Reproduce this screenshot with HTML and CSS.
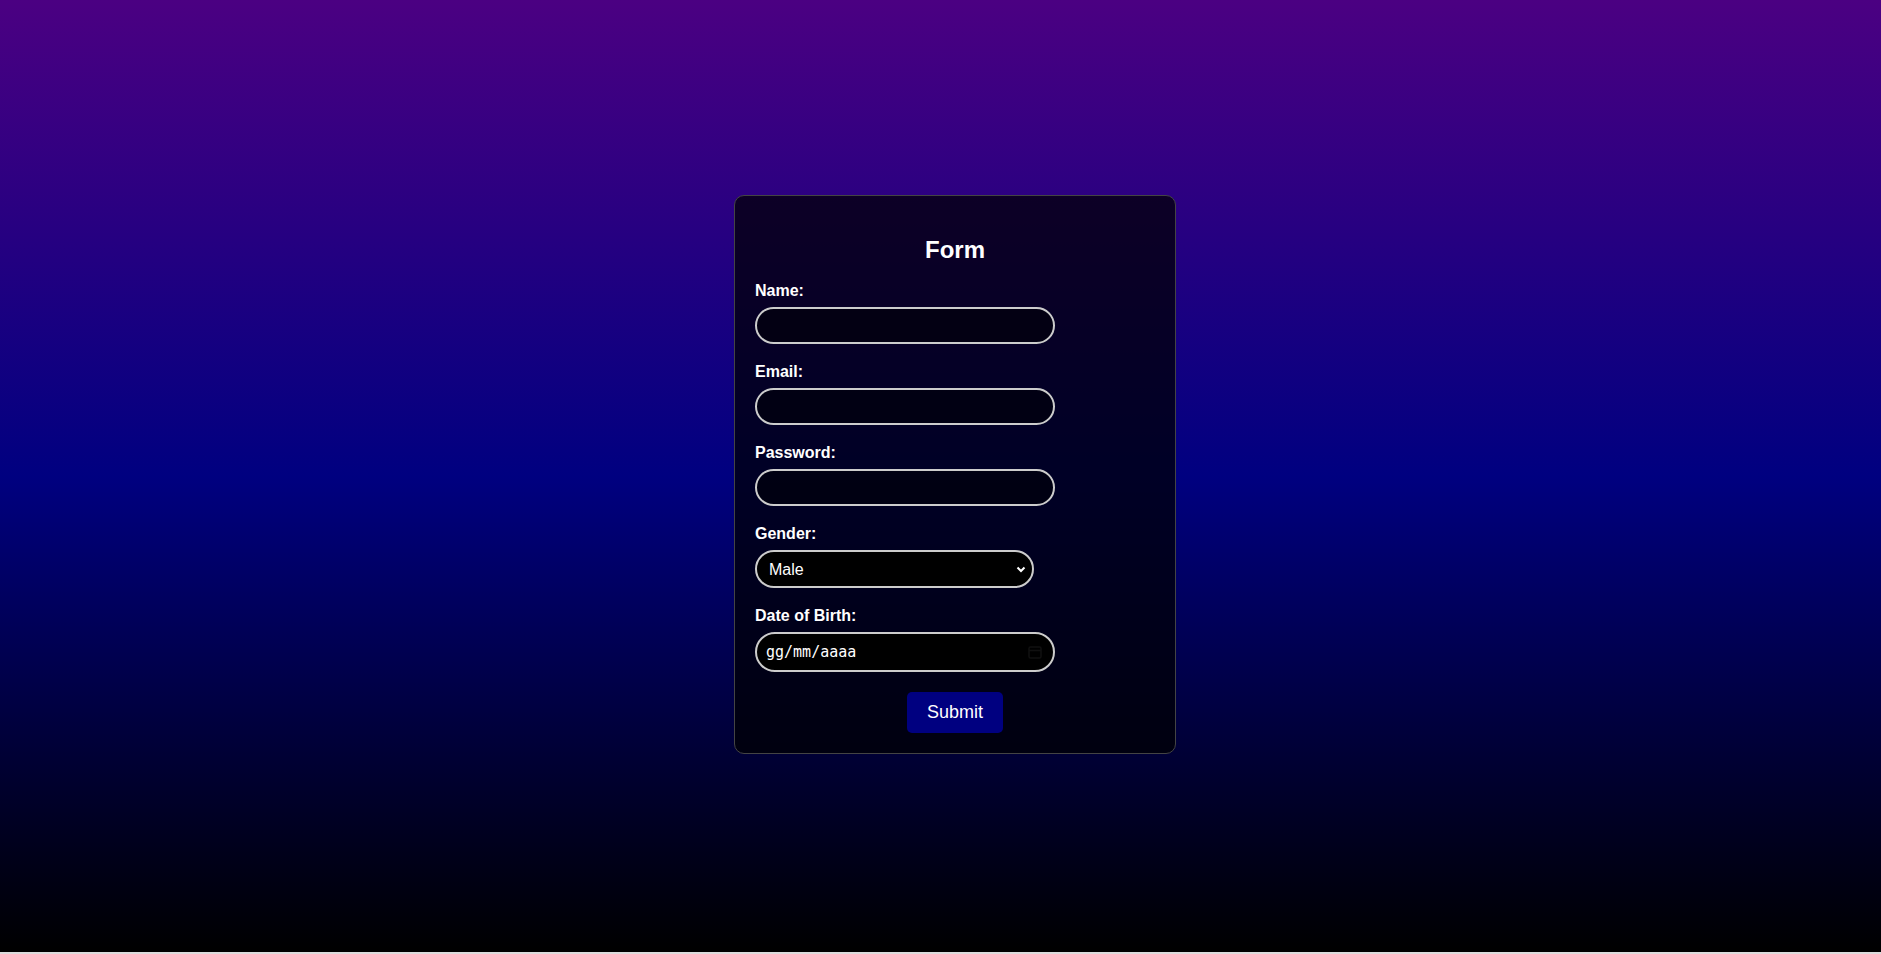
FILE: index.html
```html
<!DOCTYPE html>
<html lang="it">
<head>
<meta charset="utf-8">
<title>Form</title>
<link rel="stylesheet" href="styles.css">
</head>
<body>
  <form class="card">
    <h2 class="title">Form</h2>
    <div class="field">
      <label class="label" for="name">Name:</label>
      <input class="text-input" type="text" id="name">
    </div>
    <div class="field">
      <label class="label" for="email">Email:</label>
      <input class="text-input" type="text" id="email">
    </div>
    <div class="field">
      <label class="label" for="password">Password:</label>
      <input class="text-input" type="password" id="password">
    </div>
    <div class="field">
      <label class="label" for="gender">Gender:</label>
      <select class="select" id="gender">
        <option>Male</option>
        <option>Female</option>
      </select>
    </div>
    <div class="field field-last">
      <label class="label" for="dob">Date of Birth:</label>
      <div class="date-wrap">
        <input class="date-input" type="text" id="dob" value="gg/mm/aaaa" readonly>
        <svg class="cal-icon" width="14" height="14" viewBox="0 0 14 14" fill="none" stroke="#101010" stroke-width="1.5">
          <rect x="1" y="2" width="12" height="11" rx="1.5"/>
          <line x1="1" y1="5.5" x2="13" y2="5.5"/>
        </svg>
      </div>
    </div>
    <div class="actions">
      <button class="submit" type="button">Submit</button>
    </div>
  </form>
</body>
</html>
```
FILE: styles.css
```css
html {
  background: #dcdcdc;
}

body {
  margin: 0;
  height: 952px;
  box-sizing: border-box;
  padding-left: 29px;
  padding-bottom: 3px;
  background: linear-gradient(to bottom, #4b0082 0%, #000080 50%, #000000 100%);
  display: flex;
  justify-content: center;
  align-items: center;
  font-family: "Liberation Sans", Arial, sans-serif;
  color: #ffffff;
}

.card {
  width: 400px;
  padding: 20px;
  border: 1px solid #444444;
  border-radius: 10px;
  background: rgba(0, 0, 0, 0.7);
}

.title {
  margin: 20px 0 17px;
  font-size: 24px;
  line-height: 28px;
  font-weight: bold;
  text-align: center;
  color: #ffffff;
}

.field {
  margin-bottom: 18px;
}

.field-last {
  margin-bottom: 20px;
}

.label {
  display: block;
  font-size: 16px;
  line-height: 20px;
  font-weight: bold;
  margin-bottom: 6px;
  color: #ffffff;
}

.text-input {
  display: block;
  width: 300px;
  height: 37px;
  box-sizing: border-box;
  margin: 0;
  padding: 0 10px;
  border: 2px solid #cccccc;
  border-radius: 20px;
  background: rgba(0, 0, 0, 0.5);
  color: #ffffff;
  font-family: "Liberation Sans", Arial, sans-serif;
  font-size: 16px;
  outline: none;
}

.select {
  display: block;
  width: 279px;
  height: 38px;
  box-sizing: border-box;
  margin: 0;
  padding: 0 12px;
  border: 2px solid #cccccc;
  border-radius: 20px;
  background-color: #000000;
  background-image: url("data:image/svg+xml,%3Csvg xmlns='http://www.w3.org/2000/svg' width='10' height='7' viewBox='0 0 10 7'%3E%3Cpath d='M1.5 1.5 L5 5 L8.5 1.5' fill='none' stroke='white' stroke-width='2'/%3E%3C/svg%3E");
  background-repeat: no-repeat;
  background-position: right 6px center;
  background-size: 10px 7px;
  color: #ffffff;
  font-family: "Liberation Sans", Arial, sans-serif;
  font-size: 16px;
  -webkit-appearance: none;
  appearance: none;
  outline: none;
}

.date-wrap {
  position: relative;
  width: 300px;
}

.date-input {
  display: block;
  width: 300px;
  height: 40px;
  box-sizing: border-box;
  margin: 0;
  padding: 0 9px;
  border: 2px solid #cccccc;
  border-radius: 20px;
  background: #000000;
  color: #ffffff;
  font-family: "DejaVu Sans Mono", "Liberation Mono", monospace;
  font-size: 15px;
  outline: none;
}

.cal-icon {
  position: absolute;
  right: 13px;
  top: 13px;
}

.actions {
  text-align: center;
}

.submit {
  padding: 10px 20px;
  border: none;
  border-radius: 5px;
  background: #000080;
  color: #ffffff;
  font-family: "Liberation Sans", Arial, sans-serif;
  font-size: 18px;
  line-height: 21px;
  cursor: pointer;
}
```
